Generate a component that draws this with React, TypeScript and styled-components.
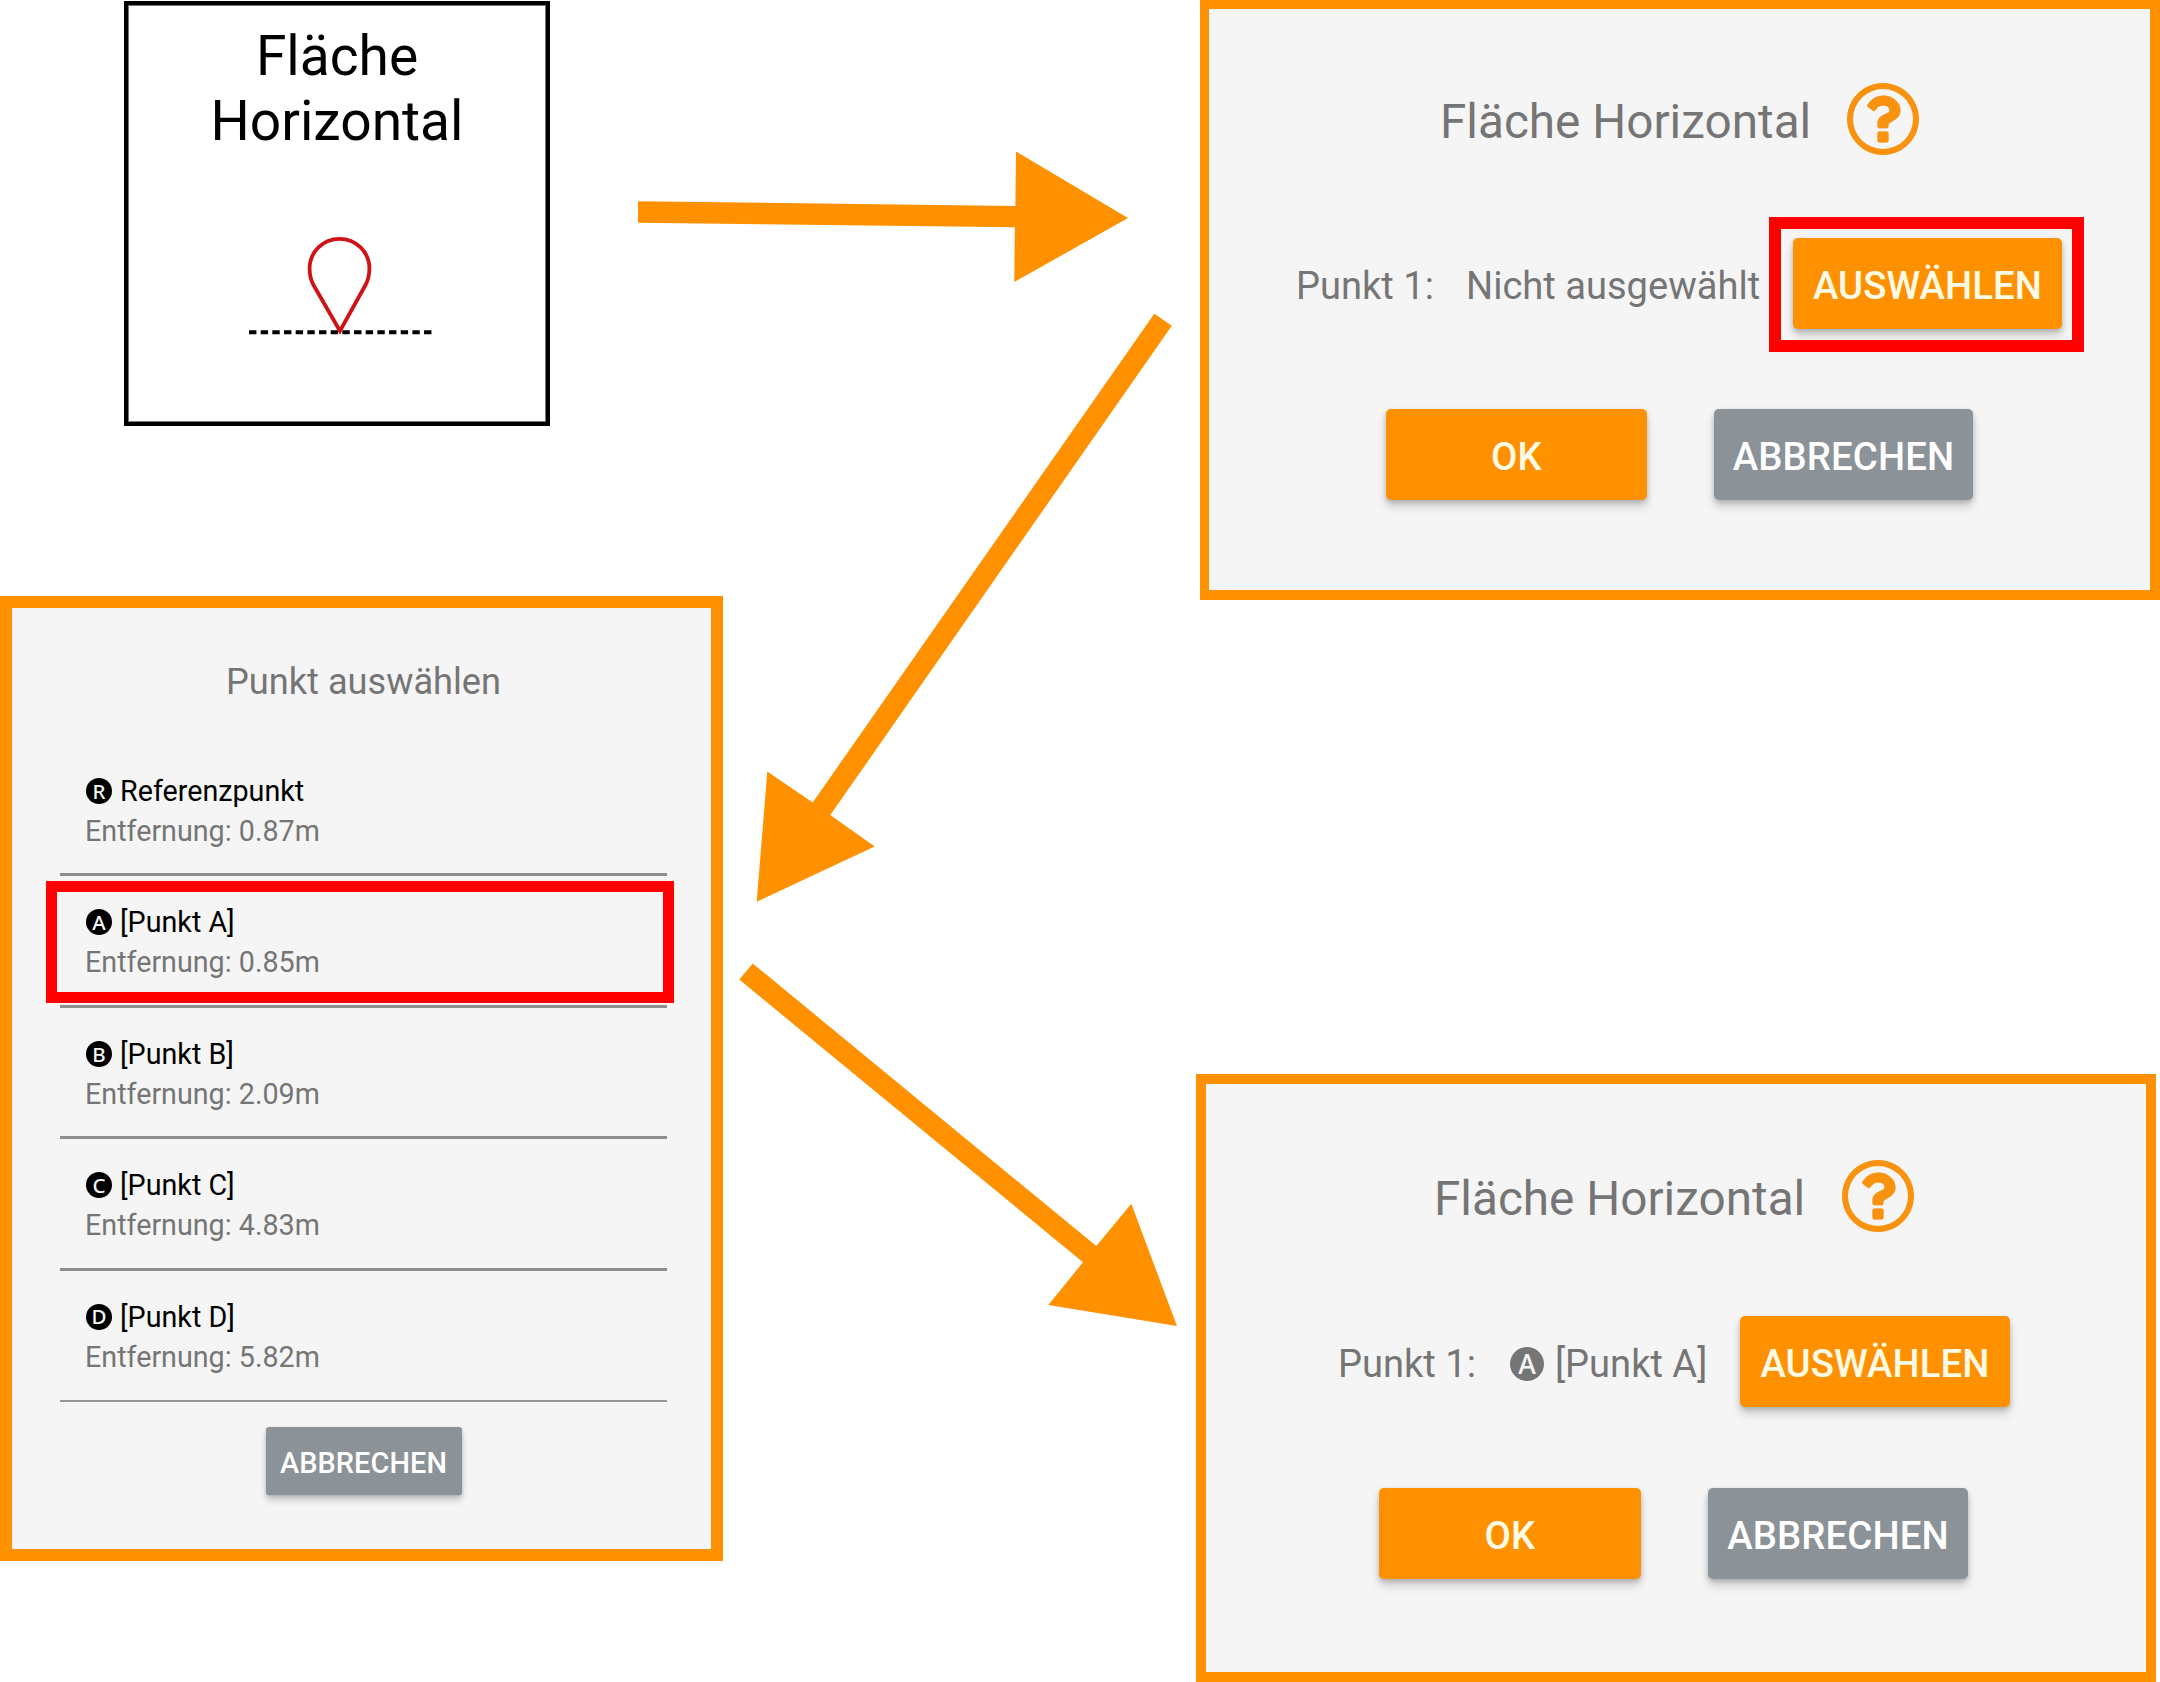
import React from 'react';
import styled, { createGlobalStyle } from 'styled-components';

const ORANGE = '#ff9100';
const GREY = '#8b9298';

const GlobalStyle = createGlobalStyle`
  * { box-sizing: border-box; }
  html, body { margin: 0; padding: 0; background: #fff; }
  body { font-family: Roboto, 'Noto Sans', sans-serif; }
`;

const Page = styled.main`
  position: relative;
  display: flex;
  width: 2160px;
  height: 1682px;
  overflow: hidden;
`;

const LeftColumn = styled.div`
  display: flex;
  flex-direction: column;
  width: 723px;
  padding-top: 1px;
`;

const RightColumn = styled.div`
  display: flex;
  flex-direction: column;
  justify-content: space-between;
  align-items: flex-end;
  flex: 1;
`;

const Tile = styled.section`
  display: flex;
  flex-direction: column;
  align-items: center;
  width: 426px;
  height: 425px;
  margin: 0 0 170px 124px;
  padding-top: 19px;
  border: 4px solid #000;
  box-shadow: inset 0 0 0 1px #777;
`;

const TileTitle = styled.h2`
  margin: 0;
  font-size: 55.1px;
  font-weight: 400;
  line-height: 64.5px;
  text-align: center;
  color: #000;
`;

const PinDrawing = styled.svg`
  display: block;
  width: 190px;
  height: 104px;
  margin: 79px 0 0 5px;
`;

const ListPanel = styled.section`
  display: flex;
  flex-direction: column;
  width: 723px;
  height: 965px;
  padding: 0 44px 0 48px;
  border: 12px solid ${ORANGE};
  background: #f5f5f5;
`;

const ListTitle = styled.h2`
  margin: 52px 0 41px;
  font-size: 36.2px;
  font-weight: 400;
  line-height: 44px;
  text-align: center;
  color: #757575;
`;

const PointList = styled.ul`
  margin: 0;
  padding: 0;
  list-style: none;
`;

const PointRow = styled.li<{ $last: boolean }>`
  position: relative;
  display: flex;
  flex-direction: column;
  height: 131.4px;
  padding: 26px 0 0 25px;
  border-bottom: ${(p) => (p.$last ? '2px solid #969896' : '3px solid #8c8e8b')};
`;

const PointName = styled.div`
  display: flex;
  align-items: center;
  gap: 8px;
  padding-left: 1px;
  font-size: 28.7px;
  line-height: 40px;
  color: #000;
`;

const Distance = styled.div`
  font-size: 28.7px;
  line-height: 40px;
  color: #757575;
`;

const Letter = styled.span<{ $size: number; $color: string }>`
  display: inline-flex;
  align-items: center;
  justify-content: center;
  width: ${(p) => p.$size}px;
  height: ${(p) => p.$size}px;
  border-radius: 50%;
  background: ${(p) => p.$color};
  color: #f5f5f5;
  font-family: 'Noto Sans', sans-serif;
  font-size: ${(p) => p.$size * 0.79}px;
  font-weight: 500;
  line-height: 1;
`;

const RowMark = styled.div`
  position: absolute;
  left: -14px;
  top: 5px;
  width: 628px;
  height: 122px;
  border: 11px solid #ff0000;
`;

const Button = styled.button<{ $tone: 'primary' | 'neutral'; $width: number; $small?: boolean }>`
  display: flex;
  align-items: center;
  justify-content: center;
  flex: none;
  width: ${(p) => p.$width}px;
  height: ${(p) => (p.$small ? 68 : 91)}px;
  padding: 5px 0 0;
  border: 0;
  border-radius: ${(p) => (p.$small ? 3 : 5)}px;
  background: ${(p) => (p.$tone === 'primary' ? ORANGE : GREY)};
  box-shadow: ${(p) =>
    p.$small ? '0 5px 7px rgba(0,0,0,.2), 0 1px 3px rgba(0,0,0,.14)' : '0 7px 10px rgba(0,0,0,.16), 0 2px 5px rgba(0,0,0,.18)'};
  font-family: inherit;
  font-size: ${(p) => (p.$small ? 28.9 : 38.3)}px;
  font-weight: 500;
  letter-spacing: 0.1px;
  line-height: 1;
  color: ${(p) => (p.$tone === 'primary' ? '#fffbe6' : '#fff')};
`;

const ListActions = styled.div`
  display: flex;
  justify-content: center;
  margin-top: 25px;
`;

const Dialog = styled.section<{ $height: number; $shift?: number; $border: string }>`
  display: flex;
  flex-direction: column;
  width: 960px;
  height: ${(p) => p.$height}px;
  margin-right: ${(p) => p.$shift ?? 0}px;
  border-style: solid;
  border-color: ${ORANGE};
  border-width: ${(p) => p.$border};
  background: #f5f5f5;
  color: #757575;
`;

const DialogHeader = styled.header<{ $top: number; $left: number }>`
  display: flex;
  align-items: flex-start;
  height: 73px;
  margin-top: ${(p) => p.$top}px;
  padding-left: ${(p) => p.$left}px;
`;

const DialogTitle = styled.h2<{ $width: number }>`
  width: ${(p) => p.$width}px;
  margin: 0;
  padding-top: 11px;
  font-size: 47.7px;
  font-weight: 400;
  line-height: 56px;
  white-space: nowrap;
`;

const HelpSvg = styled.svg`
  display: block;
  flex: none;
  width: 72px;
  height: 72px;
`;

const PointField = styled.div<{ $top: number; $left: number }>`
  display: flex;
  align-items: center;
  height: 91px;
  margin-top: ${(p) => p.$top}px;
  padding-left: ${(p) => p.$left}px;
  font-size: 38.1px;
  white-space: nowrap;
`;

const FieldLabel = styled.span<{ $width: number }>`
  width: ${(p) => p.$width}px;
  padding-top: 5px;
`;

const FieldValue = styled.span<{ $width: number }>`
  display: flex;
  align-items: center;
  gap: 11px;
  width: ${(p) => p.$width}px;
  padding-top: 5px;
`;

const Marked = styled.div`
  position: relative;
`;

const ButtonMark = styled.div`
  position: absolute;
  left: -24px;
  top: -21px;
  width: 315px;
  height: 135px;
  border: 12px solid #ff0000;
`;

const DialogActions = styled.footer<{ $top: number; $left: number }>`
  display: flex;
  gap: 67px;
  margin-top: ${(p) => p.$top}px;
  padding-left: ${(p) => p.$left}px;
`;

const Arrows = styled.svg`
  position: absolute;
  left: 0;
  top: 0;
  width: 2160px;
  height: 1682px;
  fill: ${ORANGE};
  pointer-events: none;
`;

const HelpIcon = () => (
  <HelpSvg viewBox="128 128 1536 1536" fill="#f9920f">
    <path d="M1008 1200v160q0 14-9 23t-23 9h-160q-14 0-23-9t-9-23v-160q0-14 9-23t23-9h160q14 0 23 9t9 23zm256-496q0 50-15 90t-45.500 69-52 44-59.500 36q-32 18-46.500 28t-26 24-11.500 29v32q0 14-9 23t-23 9h-160q-14 0-23-9t-9-23v-68q0-35 10.500-64.500t24-47.500 39-35.500 41-25.500 44.500-21q53-25 75-43t22-49q0-42-43.500-71.500t-95.500-29.500q-56 0-95 27-29 20-80 83-9 12-25 12-11 0-19-6l-108-82q-10-7-12-20t5-23q122-192 349-192 129 0 238.500 89.500t109.500 214.500z" stroke="#f9920f" strokeWidth="16" />
    <path d="M896 256q-130 0-248.500 51t-204 136.500-136.500 204-51 248.500 51 248.500 136.500 204 204 136.500 248.500 51 248.500-51 204-136.500 136.500-204 51-248.500-51-248.500-136.500-204-204-136.500-248.500-51zm768 640q0 209-103 385.500t-279.500 279.500-385.500 103-385.500-103-279.500-279.500-103-385.500 103-385.500 279.500-279.500 385.500-103 385.500 103 279.500 279.500 103 385.500z" />
  </HelpSvg>
);

const points = [
  { letter: 'R', name: 'Referenzpunkt', distance: '0.87m' },
  { letter: 'A', name: '[Punkt A]', distance: '0.85m', marked: true },
  { letter: 'B', name: '[Punkt B]', distance: '2.09m' },
  { letter: 'C', name: '[Punkt C]', distance: '4.83m' },
  { letter: 'D', name: '[Punkt D]', distance: '5.82m' },
];

export default function App() {
  return (
    <Page>
      <GlobalStyle />
      <LeftColumn>
        <Tile>
          <TileTitle>
            Fläche
            <br />
            Horizontal
          </TileTitle>
          <PinDrawing viewBox="245 232 190 104" fill="none">
            <path d="M249 332.300H432" stroke="#000" strokeWidth="4" strokeDasharray="7.400 4.270" />
            <path
              d="M340 331L313.500 285C310.500 279.500 309.600 274 309.600 268.500C309.600 252 323 238.800 339.500 238.800C356 238.800 369.400 252 369.400 268.500C369.400 274 368.500 279.500 365.500 285Z"
              stroke="#cf1216"
              strokeWidth="3.800"
            />
          </PinDrawing>
        </Tile>

        <ListPanel>
          <ListTitle>Punkt auswählen</ListTitle>
          <PointList>
            {points.map((p, i) => (
              <PointRow key={p.letter} $last={i === points.length - 1}>
                <PointName>
                  <Letter $size={26} $color="#000">{p.letter}</Letter>
                  {p.name}
                </PointName>
                <Distance>Entfernung: {p.distance}</Distance>
                {p.marked && <RowMark />}
              </PointRow>
            ))}
          </PointList>
          <ListActions>
            <Button $tone="neutral" $width={196} $small>ABBRECHEN</Button>
          </ListActions>
        </ListPanel>
      </LeftColumn>

      <RightColumn>
        <Dialog $height={600} $border="9px 10px 10px 9px">
          <DialogHeader $top={74} $left={231}>
            <DialogTitle $width={407}>Fläche Horizontal</DialogTitle>
            <HelpIcon />
          </DialogHeader>
          <PointField $top={82} $left={87}>
            <FieldLabel $width={170}>Punkt 1:</FieldLabel>
            <FieldValue $width={327}>Nicht ausgewählt</FieldValue>
            <Marked>
              <Button $tone="primary" $width={269}>AUSWÄHLEN</Button>
              <ButtonMark />
            </Marked>
          </PointField>
          <DialogActions $top={80} $left={177}>
            <Button $tone="primary" $width={261}>OK</Button>
            <Button $tone="neutral" $width={259}>ABBRECHEN</Button>
          </DialogActions>
        </Dialog>

        <Dialog $height={608} $shift={4} $border="10px">
          <DialogHeader $top={76} $left={228}>
            <DialogTitle $width={408}>Fläche Horizontal</DialogTitle>
            <HelpIcon />
          </DialogHeader>
          <PointField $top={83} $left={132}>
            <FieldLabel $width={172}>Punkt 1:</FieldLabel>
            <FieldValue $width={230}>
              <Letter $size={34} $color="#757575">A</Letter>
              [Punkt A]
            </FieldValue>
            <Button $tone="primary" $width={270}>AUSWÄHLEN</Button>
          </PointField>
          <DialogActions $top={81} $left={173}>
            <Button $tone="primary" $width={262}>OK</Button>
            <Button $tone="neutral" $width={260}>ABBRECHEN</Button>
          </DialogActions>
        </Dialog>
      </RightColumn>

      <Arrows viewBox="0 0 2160 1682">
        <polygon points="638,201.300 1015.400,206 1016,151.500 1128,218 1014.300,282 1014.800,227.300 638,222.700" />
        <polygon points="1154.300,313.700 1171.800,325.700 830.300,815.100 874.700,846.400 756.700,901.700 767.300,771.600 812.700,802.500" />
        <polygon points="752.700,963.400 1096.300,1246.100 1131.300,1203.800 1177,1326 1048.300,1305 1083,1262.300 739.300,979.600" />
      </Arrows>
    </Page>
  );
}
